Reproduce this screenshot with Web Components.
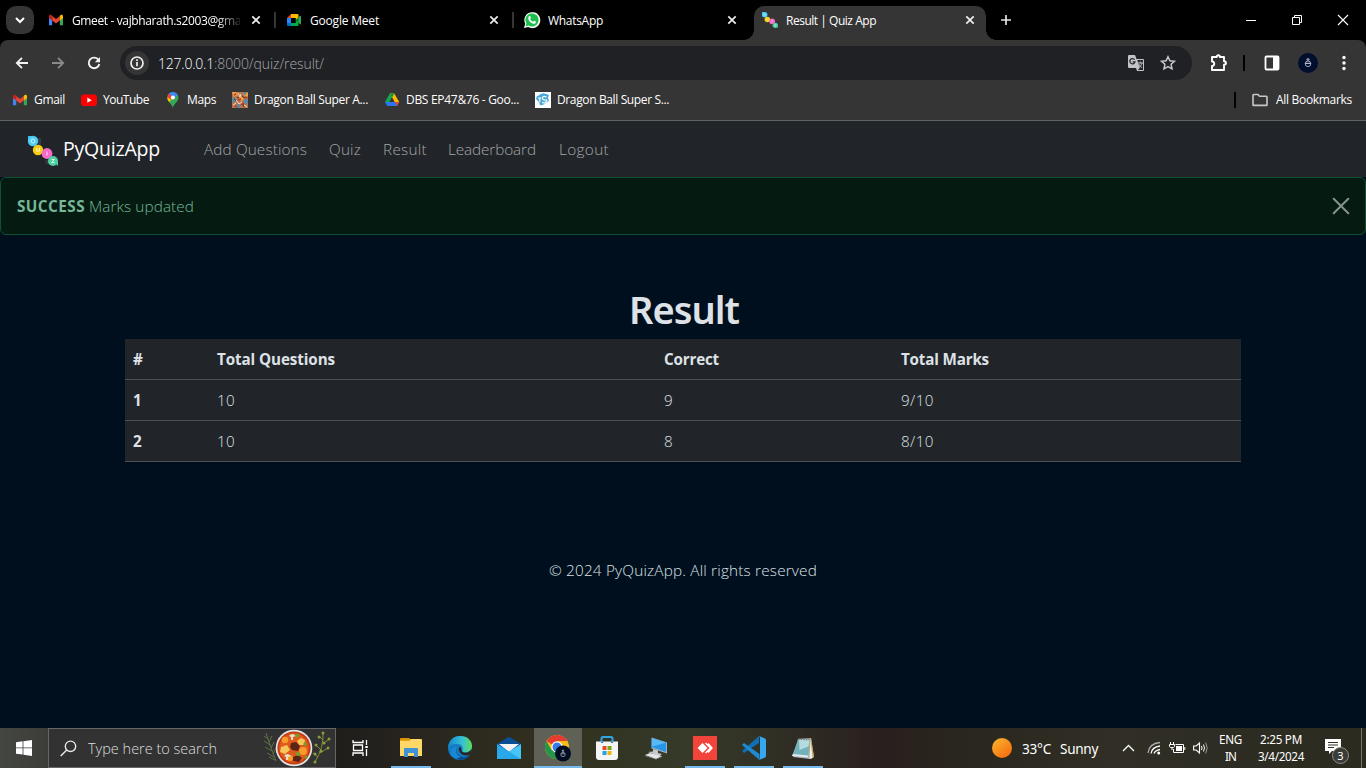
<!DOCTYPE html>
<html lang="en">
<head>
<meta charset="utf-8">
<title>Result | Quiz App</title>
<style>
html,body{margin:0;height:100%;overflow:hidden;background:#000f1e}
body{font-family:"Open Sans","Noto Sans",sans-serif;font-size:12px;color:#fff}
</style>
</head>
<body>
<desktop-screen></desktop-screen>
<script>
const ICONS = {
 gmail:[16,16,'<path d="M1 4v9.2h3.2V7.6z" fill="#4285f4"/><path d="M11.8 7.4v5.8H15V4z" fill="#34a853"/><path d="M1 4.2v2l3.2 2.4V4L3.4 3C2.2 2.3 1 3 1 4.2z" fill="#c5221f"/><path d="M4.2 4L8 6.9 11.8 4v4.6L8 11.4 4.2 8.6z" fill="#ea4335"/><path d="M15 4.2v2l-3.2 2.4V4l.8-1c1.200-.7 2.400 0 2.400 1.200z" fill="#fbbc04"/>'],
 meet:[16,16,'<path d="M1 6l4-4v4z" fill="#ea4335"/><path d="M5 2h6.500q1 0 1 1v4l-3 1V6H5z" fill="#ffba00"/><path d="M1 6h4v5H1z" fill="#2684fc"/><path d="M1 11h4v3H2q-1 0-1-1z" fill="#0066da"/><path d="M5 11h4.500V8l3-1v6q0 1-1 1H5z" fill="#00ac47"/><path d="M5 6h4.500v5H5z" fill="#000"/><path d="M9.500 8L14 4q1-.7 1 .3v7.400q0 1-1 .3z" fill="#00832d"/><path d="M12.500 5.300L14.200 4q.8-.5.8.3v7.400q0 .8-.8.3l-1.700-1.400z" fill="#34a853"/>'],
 whatsapp:[16,16,'<path d="M0 16l1.200-4.200A8 8 0 1 1 4.200 15z" fill="#fff"/><path d="M1.500 14.500l.9-3A6.600 6.600 0 1 1 4.500 13.600z" fill="#1dbf4c"/><path d="M5 4.200c.4-.4 1-.4 1.200 0l.7 1.600c0 .5-.5.8-.8 1.200.7 1.300 1.600 2.100 2.900 2.700.4-.3.700-1 1.200-1l1.600.8c.4.4 0 1.500-.7 1.900-1.800 1-5-.9-6.200-3C4.200 6.900 4 5.200 5 4.200z" fill="#fff"/>'],
 quiz:[30,30,'<path d="M10 2h3v7h-3zM17 24h5v4h-4z" fill="#333b48"/><path d="M0 0h6v6H0z" fill="#35bdea"/><circle cx="5" cy="5" r="5.200" fill="#4dccf4"/><circle cx="10" cy="14" r="5.200" fill="#f9cf16"/><circle cx="19" cy="17.500" r="5.400" fill="#f56cc8"/><circle cx="25" cy="25" r="5" fill="#4fcfa0"/><path d="M26 26h4v4z" fill="#4fcfa0"/><g stroke="#fff" fill="none" opacity=".75"><circle cx="5" cy="5" r="2"/><path d="M8.500 12v2q0 1.500 1.500 1.500t1.500-1.500v-2M19 15.500v4M23.500 23.500h3l-3 3h3"/></g>'],
 down:[12,12,'<path d="M2 4l4 4 4-4" fill="none" stroke="#fff" stroke-width="2"/>'],
 x:[10,10,'<path d="M1.300 1.300l7.400 7.400M8.700 1.300L1.300 8.700" stroke="#eee" stroke-width="1.700"/>'],
 plus:[12,12,'<path d="M6 1v10M1 6h10" stroke="#e6e6e6" stroke-width="1.700"/>'],
 min:[10,10,'<path d="M0 5.500h10" stroke="#fff"/>'],
 restore:[10,10,'<path d="M.5 2.500h7v7h-7zM2.500 2.500v-2h7v7h-2" fill="none" stroke="#fff"/>'],
 wclose:[10,10,'<path d="M0 0l10 10M10 0L0 10" stroke="#fff" stroke-width="1.100"/>'],
 back:[14,14,'<path d="M13 7H2M7 1.800L1.800 7 7 12.200" fill="none" stroke="#f2f2f2" stroke-width="1.800"/>'],
 fwd:[14,14,'<path d="M1 7h11M7 1.800L12.200 7 7 12.200" fill="none" stroke="#8b8b8b" stroke-width="1.800"/>'],
 reload:[14,14,'<path d="M11.500 4A5.300 5.300 0 1 0 12.300 8" fill="none" stroke="#f2f2f2" stroke-width="1.900"/><path d="M13 1v5.200H7.800z" fill="#f2f2f2"/>'],
 info:[16,16,'<circle cx="8" cy="8" r="6" fill="none" stroke="#eee" stroke-width="1.700"/><path d="M8 7v4.200M8 4.300v1.700" stroke="#eee" stroke-width="1.700"/>'],
 translate:[16,16,'<path d="M1 0h6l1.500 4H15q1 0 1 1v10q0 1-1 1H9l-1-3H1q-1 0-1-1V1q0-1 1-1z" fill="#c0c3c7"/><path d="M9 5h6v10H9.800l2-2L9.300 5z" fill="#222428"/><path d="M10 8h5M12.300 6.500V8M14 8c-.4 2-2 3.500-3 4.200M11 9.200c.7 1.500 2 2.800 3 3.500" stroke="#c0c3c7" fill="none"/><path d="M6.600 4.700A2.600 2.600 0 1 0 7 6.800H4.700" stroke="#27292d" stroke-width="1.300" fill="none"/>'],
 star:[16,16,'<path d="M8 1.700l1.900 4.100 4.500.5-3.300 3 .9 4.500-4-2.300-4 2.300.9-4.500-3.300-3 4.500-.5z" fill="none" stroke="#c7c9cc" stroke-width="1.500"/>'],
 ext:[18,18,'<path d="M2 3h4.700c0-2.300 3.200-2.300 3.200 0H14v4.300c2.600 0 2.600 3.400 0 3.400V16H2v-4c3-.2 3-4.300 0-4.500z" fill="none" stroke="#fff" stroke-width="1.900" stroke-linejoin="round"/>'],
 panel:[16,16,'<rect x="1.500" y="1.500" width="13" height="13" rx="1" fill="none" stroke="#fff" stroke-width="1.800"/><path d="M9 1h6v14H9z" fill="#fff"/>'],
 avatar:[20,20,'<circle cx="10" cy="10" r="10" fill="#020e2e"/><circle cx="10" cy="6.500" r="1.600" fill="#8990a3"/><circle cx="10" cy="10.800" r="2.800" fill="none" stroke="#9ba2b2"/><path d="M7 9.800h6v1.200H7z" fill="#b5bac6"/>'],
 dots:[4,16,'<circle cx="2" cy="2.500" r="1.700" fill="#fff"/><circle cx="2" cy="8" r="1.700" fill="#fff"/><circle cx="2" cy="13.500" r="1.700" fill="#fff"/>'],
 youtube:[16,16,'<rect y="2.500" width="16" height="11.500" rx="3" fill="#f00"/><path d="M6.300 5.600v5.200L10.800 8.200z" fill="#fff"/>'],
 maps:[16,16,'<path d="M7.700 16C7.500 12.500 2.300 10 2.300 5.600a5.600 5.600 0 0 1 11.200 0C13.500 10 8.200 12.500 7.700 16z" fill="#34a853"/><path d="M2.300 5.600c0 2 1 3.500 1.900 4.700L8 5.600z" fill="#fbbc04"/><path d="M6 .3a5.600 5.600 0 0 1 6.900 3L8 7z" fill="#4285f4"/><path d="M4 1.400L8 5 6 7.500 2.400 5Q2.600 2.800 4 1.400z" fill="#ea4335"/><path d="M3.800 1.500Q5 .4 6.500.2L8 5z" fill="#4285f4"/><circle cx="7.900" cy="5.600" r="2" fill="#fff"/>'],
 anime:[16,16,'<path d="M0 0h16v16H0z" fill="#b8734a"/><path d="M0 0h4l2 3-4 2zM11 1h5v3l-3 1zM7 6l3-2 2 4-3 1z" fill="#f0a040"/><path d="M1 5l4 3-3 3-2-2zM11 8l5-1v4l-3 1zM6 12l3 1-2 3H4zM12 0h2v3l-3-1z" fill="#4f8cae"/><path d="M6 1l2 4 1-3M4 8l3 4 3-2M1 13l3-2M12 13l3 2" stroke="#eedfc8" fill="none"/><path d="M6 8l3-1M13 5l2 1M9 13l3-2M2 3l2-1M3 14l2 1" stroke="#c9302a" stroke-width="1.400"/><path d="M10 4l3 2M2 7l2 2M11 12l1 3M5 5l2 1" stroke="#403a3c"/>'],
 drive:[16,16,'<path d="M5.800 1.500h4.500l-2.300 4L3.400 14 1 10z" fill="#12a650"/><path d="M5.800 1.500h4.500L15.200 10h-4.700z" fill="#fcb900"/><path d="M5.800 1.500h4.500L8 5.600z" fill="#0d8a42"/><path d="M3.700 10h11.500L13 14H3.200L1 10z" fill="#2a75ed"/><path d="M11 10h4.200L13 14z" fill="#e9432f"/><path d="M8 5.600L10.600 10H5.500z" fill="#353535"/>'],
 dbs:[16,16,'<path d="M0 0h16v16H0z" fill="#fff"/><path d="M3 4q4-4 8-2l3 1-1 3 1 3-2 1q-3 4-7 3l-1-3-3-3 1-3z" fill="#4aa8d6"/><path d="M11.500 5q-4-1.500-4 1t3 2-.5 3L7 10.500M3 6h3.500M4.800 6v4" stroke="#fff" stroke-width="1.200" fill="none"/>'],
 folder:[16,16,'<path d="M1 3.200q0-.7.700-.7H6l1.600 1.700h6.700q.7 0 .7.700v7.800q0 .7-.7.700H1.700q-.7 0-.7-.7z" fill="none" stroke="#c7c7c7" stroke-width="1.600"/>'],
 alertx:[16,16,'<path d="M.7.7l14.600 14.600M15.300.7L.7 15.300" stroke="#87928b" stroke-width="2" stroke-linecap="round"/>'],
 win:[16,16,'<path d="M0 2.200l6.600-.9v6.200H0zM7.400 1.200L16 0v7.500H7.400zM0 8.300h6.600v6.300L0 13.700zM7.400 8.300H16V16l-8.600-1.200z" fill="#fff"/>'],
 search:[17,17,'<circle cx="10.500" cy="6.300" r="5.200" fill="none" stroke="#e6e6e6" stroke-width="1.400"/><path d="M6.700 10L.7 16" stroke="#e6e6e6" stroke-width="1.500"/>'],
 stew:[68,38,'<g stroke="#5f7146" fill="none"><path d="M3 4q5 15 10 28M5 10L1 7M6 13l3-6M7 16l-6-4M8 19l3-6M9 22l-7-4M10 25l3-6M11 28l-7-4M12 31l-6-3"/></g><g stroke="#7f8f38" fill="none"><path d="M60 4q1 14-8 29M60 11l-4-4M60 15l6-5M58 21l-6-6M57 24l8-5M55 28l-5-4"/></g><g fill="#8b9c3a"><circle cx="60" cy="4" r="1.500"/><circle cx="56" cy="8" r="1.500"/><circle cx="66" cy="10" r="1.500"/><circle cx="61" cy="14" r="1.500"/><circle cx="53" cy="16" r="1.500"/><circle cx="65" cy="19" r="1.500"/><circle cx="58" cy="22" r="1.500"/><circle cx="52" cy="25" r="1.500"/><circle cx="52" cy="33" r="1.500"/></g><circle cx="31" cy="19" r="18.300" fill="#dfe3e5"/><circle cx="31" cy="19" r="16.600" fill="#c83a12"/><circle cx="31" cy="19" r="14.800" fill="#df5a1c"/><g fill="#f79b2c"><circle cx="22" cy="11" r="3.300"/><circle cx="40" cy="22" r="3.900"/><circle cx="27" cy="29" r="3"/></g><g fill="#f6c65a"><path d="M18 18l6-2 3 5-5 4-5-2zM34 12l4-3 4 2-1 5-5 0z"/></g><g fill="#5b2415"><path d="M28 14l5-1 4 4-2 5-6-1-2-3zM30 28l5-2 4 3-3 4-6-1z"/></g><g fill="#eadbc5"><path d="M26 7q3-4 7 0l-3 1v3h-2V8zM21 27q3-4 7 0l-3 1v3h-2v-3z"/></g><g fill="#6aa32c"><circle cx="34" cy="6.500" r="2"/><circle cx="35" cy="25" r="2"/><circle cx="42" cy="15" r="1.700"/><circle cx="43" cy="28" r="1.500"/></g>'],
 taskview:[17,16,'<path d="M1 0v2.500h10V0M1 16v-3h10v3M1.500 5h9v5.500h-9zM14.500 0v5M14.500 9v7" fill="none" stroke="#fff" stroke-width="1.300"/><path d="M13.300 6h2.500v2h-2.500z" fill="#fff"/>'],
 explorer:[24,24,'<path d="M1 3q0-1 1-1h8l2 2H1z" fill="#d79300"/><path d="M1 4h9l2-1h10q1 0 1 1v16H1z" fill="#ffd766"/><path d="M1 4h9l1-1v2H1z" fill="#e9a519"/><path d="M5 13q0-1 1-1h12q1 0 1 1v8h-4v-4H9v4H5z" fill="#3e92d6"/>'],
 edge:[24,24,'<defs><linearGradient id="a"><stop stop-color="#1689ce"/><stop offset=".6" stop-color="#35c1d3"/><stop offset="1" stop-color="#62dc55"/></linearGradient></defs><circle cx="12" cy="12" r="12" fill="#147bc5"/><path d="M.3 11C1 3 7 0 12 0c8 0 12 5 12 10 0 4-3 6.300-6.500 6.300-2.500 0-4-1-3-2.300C16 11 13 8 9 8 5 8 1 9 .3 12z" fill="url(#a)"/><path d="M8.500 12c-1 5 3 9 7.500 9 3 0 5-1.500 6.300-2.500C20 22 16 24 12 24c-5-1-7-9-3.500-12z" fill="#0b4a8c"/><path d="M11 11c3 0 2 3 3 4.500q2 2 6 .8l4-3-1 5c-3 2-9 1.700-11-1.700q-2-3-1-5.600z" fill="#2b2723"/><path d="M9 11.500c-2 4 0 8 4 9.500-5 3-11-1-10-6 .3-3 3-4.500 6-3.500z" fill="#1989d5"/>'],
 mail:[24,24,'<path d="M0 8L12 .8 24 8v6H0z" fill="#0a4f96"/><path d="M2 8h20L12 16z" fill="#f4f4f4"/><path d="M0 8l12 7.500V23H0z" fill="#27a9ec"/><path d="M24 8v15H0z" fill="#46c6f8"/><path d="M12 15.500L24 23H0z" fill="#1b9be0" opacity=".7"/>'],
 chrome:[26,27,'<circle cx="12" cy="12" r="12" fill="#f6bd17"/><path d="M1.600 6A12 12 0 0 1 22.400 6H12v7z" fill="#e33b2e"/><path d="M1.600 6A12 12 0 0 0 12 24l5-9H6.500z" fill="#23964a"/><circle cx="12" cy="12" r="5.700" fill="#fff"/><circle cx="12" cy="12" r="4.500" fill="#367be8"/><circle cx="18" cy="18.500" r="8" fill="#020d24"/><circle cx="18" cy="15.800" r="1.200" fill="#7b8294"/><circle cx="18" cy="19.500" r="2.200" fill="none" stroke="#8a91a2" stroke-width=".9"/><path d="M16 18.800h4" stroke="#8a91a2"/>'],
 store:[24,24,'<path d="M6.500 6V2.500q0-1.500 1.500-1.500h8q1.500 0 1.500 1.500V6" fill="none" stroke="#31a8e5" stroke-width="2"/><path d="M1 5.500h22V21q0 3-3 3H4q-3 0-3-3z" fill="#f5f5f5"/><path d="M7.500 10h4v4h-4z" fill="#e74d25"/><path d="M12.500 10h4v4h-4z" fill="#75a915"/><path d="M7.500 15h4v4h-4z" fill="#20a2e7"/><path d="M12.500 15h4v4h-4z" fill="#f5b40c"/><path d="M6 5.500h2.200V7H6zM16 5.500h2.200V7H16z" fill="#2482be"/>'],
 pc:[24,24,'<path d="M7.500 1.500l15.500 5v11L7.500 12.500z" fill="#9fb0bc"/><path d="M8 2l14 4.800v9.200L7 11z" fill="#2896e8"/><path d="M8 2l14 4.800L8 10.500z" fill="#59b9f5"/><path d="M9 13l5 1.500V17l4 1-3 2-11-4 5-.5z" fill="#c4c8ca"/><path d="M1 19l5-2 12 3-6 3z" fill="#e3e5e6"/><path d="M1 19l11 4 6-3v1l-6 2.500L1 20z" fill="#84898c"/>'],
 anydesk:[24,24,'<path d="M0 0h24v24H0z" fill="#f2443b"/><path d="M4.500 12l5-5 5 5-5 5z" fill="#fff"/><path d="M12.500 7l5 5-5 5M15 7.500l4 4.500-4 4.500" fill="none" stroke="#fff" stroke-width="1.400"/>'],
 vscode:[24,24,'<path d="M0 15L17 0v7L2 17z" fill="#0f6fb5"/><path d="M0 9l2-2L17.500 18v6z" fill="#1e8ad3"/><path d="M17 0l6 2.500q1 .5 1 1.500v16q0 1-1 1.500L17 24q1-1 1-2V2q0-1-1-2z" fill="#35a8ef"/>'],
 notepad:[24,24,'<path d="M7 3l13-1 3 19-4 2-17-2z" fill="#a9b4b8"/><path d="M20 2l3 19-4 2-1-15z" fill="#caa75a"/><path d="M19.500 3l2 19-3 1z" fill="#eee"/><path d="M7 4l12 .5-2 17L1 20z" fill="#73b1bb"/><path d="M8 4l10.500.5-1 6-9 3.500z" fill="#b5dbe0"/><path d="M1 20l16 1.500.2-2L2 18z" fill="#e4e9ea"/><path d="M8 2v2M10.500 2v2M13 2v2M15.500 2v2M18 2v2" stroke="#777"/>'],
 sun:[20,20,'<defs><linearGradient id="s" x2=".8" y2="1"><stop stop-color="#fbb832"/><stop offset="1" stop-color="#f56b0c"/></linearGradient></defs><circle cx="10" cy="10" r="10" fill="url(#s)"/>'],
 up:[13,13,'<path d="M1 9l5.500-5.500L12 9" fill="none" stroke="#fff" stroke-width="1.300"/>'],
 wifi:[14,14,'<g fill="none" stroke-width="1.300"><path d="M1 12Q2 2.500 13 1.500" stroke="#aaa"/><path d="M4 12.500Q5 6 13 5M7 12.500Q8 9.500 13 8.500" stroke="#fff"/></g><circle cx="11.700" cy="12" r="1.500" fill="#fff"/>'],
 battery:[17,14,'<path d="M6.500 3.500h8v8h-10V8M15.800 6v3" fill="none" stroke="#fff"/><path d="M7 5h6v5H7z" fill="#fff"/><path d="M1.500 1v2M4.500 1v2M.5 3.500h5v2l-1 1h-3l-1-1zM3 6.500V9" fill="none" stroke="#fff"/>'],
 speaker:[16,14,'<path d="M.6 5h2.600l3.300-3v10L3.200 9H.6z" fill="none" stroke="#fff" stroke-width="1.100"/><path d="M8.500 5q1 2 0 4M10.500 3.500q2 3.500 0 7" stroke="#fff" fill="none"/><path d="M12.700 1.500q3 5.500 0 11" stroke="#999" fill="none"/>'],
 note:[16,16,'<path d="M0 0h16v12H7l-3 3v-3H0z" fill="#fff"/><path d="M3 3.500h10M3 6h10M3 8.500h6" stroke="#302e26" stroke-width="1.200"/>']
};
const define = (name, css, html, setup) => customElements.define(name, class extends HTMLElement {
  connectedCallback() {
    if (this.shadowRoot) return;
    const root = this.attachShadow({mode: 'open'});
    root.innerHTML = `<style>${css}</style>${typeof html === 'function' ? html(this) : html}`;
    if (setup) setup(this, root);
  }
});

define('ui-icon', ':host{display:block;flex:none}svg{display:block;overflow:visible}', el => {
  const [w, h, body] = ICONS[el.getAttribute('name')];
  const s = el.getAttribute('size');
  return `<svg width="${s || w}" height="${s || h}" viewBox="0 0 ${w} ${h}">${body}</svg>`;
});

define('desktop-screen', ':host{display:flex;flex-direction:column;width:1366px;height:768px}', `
<tab-strip></tab-strip><address-bar></address-bar><bookmark-bar></bookmark-bar>
<quiz-page></quiz-page><task-bar></task-bar>`);

define('browser-tab', `
:host{display:flex;align-items:center;width:238px;height:40px;box-sizing:border-box;padding:0 13px 0 12px;position:relative;flex:none}
ui-icon{margin-right:8px}.t{flex:1;overflow:hidden;white-space:nowrap}
:host([long]) .t{flex:0 0 168px;-webkit-mask:linear-gradient(90deg,#000 144px,transparent 172px);mask:linear-gradient(90deg,#000 144px,transparent 172px)}
.x{margin:0 0 0 auto}
:host([sep])::before{content:"";position:absolute;left:0;top:12px;width:2px;height:16px;background:#363636}
:host([active])::before{content:"";position:absolute;left:4px;right:2px;top:6px;bottom:0;background:#353535;border-radius:10px 10px 0 0}
:host([active])::after{content:"";position:absolute;left:-6px;right:-8px;bottom:0;height:10px;background:radial-gradient(circle at 0 0,transparent 9.500px,#353535 10px) 0 0/10px 10px no-repeat,radial-gradient(circle at 100% 0,transparent 9.500px,#353535 10px) 100% 0/10px 10px no-repeat}
ui-icon,.t{z-index:1}`,
el => `<ui-icon name="${el.getAttribute('icon')}" size="16"></ui-icon><div class="t"><slot></slot></div><ui-icon class="x" name="x"></ui-icon>`);

define('tab-strip', `
:host{display:flex;height:40px;background:#000;align-items:center}
.menu{display:grid;place-items:center;width:28px;height:28px;border-radius:10px;background:#353535;margin:0 2px 0 6px}
.plus{margin-left:12px}.win{display:flex;margin-left:auto;padding-right:18px;gap:36px}`, `
<div class="menu"><ui-icon name="down"></ui-icon></div>
<browser-tab icon="gmail" long><fit-text w="169">Gmeet - vajbharath.s2003@gma</fit-text></browser-tab>
<browser-tab icon="meet" sep><fit-text w="69">Google Meet</fit-text></browser-tab>
<browser-tab icon="whatsapp" sep><fit-text w="55">WhatsApp</fit-text></browser-tab>
<browser-tab icon="quiz" active><fit-text w="90">Result | Quiz App</fit-text></browser-tab>
<ui-icon class="plus" name="plus"></ui-icon>
<div class="win"><ui-icon name="min"></ui-icon><ui-icon name="restore"></ui-icon><ui-icon name="wclose"></ui-icon></div>`);

define('address-bar', `
:host{display:flex;align-items:center;height:46px;background:#353535;border-radius:8px 8px 0 0;box-shadow:0 -8px #000;box-sizing:border-box;padding:0 20px 0 15px;clip-path:inset(0)}
.nav{display:flex;gap:22px;width:105px}
.omni{display:flex;align-items:center;box-sizing:border-box;width:1072px;height:34px;border-radius:17px;background:#202125;padding:0 16px 0 5px}
.info{display:grid;place-items:center;width:24px;height:24px;border-radius:50%;background:#353535;margin-right:9px}
.url{flex:1;font-size:14px;font-weight:300;color:#a5a7aa;white-space:nowrap}.url fit-text:first-child{color:#fff}
.omni>ui-icon+ui-icon{margin-left:16px}
.right{display:flex;align-items:center;margin-left:auto}
.bar{width:2px;height:16px;background:#000;margin:0 19px 0 15px}`, `
<div class="nav"><ui-icon name="back"></ui-icon><ui-icon name="fwd"></ui-icon><ui-icon name="reload"></ui-icon></div>
<div class="omni"><div class="info"><ui-icon name="info"></ui-icon></div>
<div class="url"><fit-text w="56">127.0.0.1</fit-text><fit-text w="110">:8000/quiz/result/</fit-text></div>
<ui-icon name="translate"></ui-icon><ui-icon name="star"></ui-icon></div>
<div class="right"><ui-icon name="ext"></ui-icon><div class="bar"></div><ui-icon name="panel"></ui-icon><ui-icon name="avatar" style="margin:0 24px 0 18px"></ui-icon><ui-icon name="dots"></ui-icon></div>`);

define('book-mark', ':host{display:flex;align-items:center;gap:6px;white-space:nowrap}:host([wide]){gap:8px}',
el => `<ui-icon name="${el.getAttribute('icon')}"></ui-icon><slot></slot>`);

define('bookmark-bar', `
:host{display:flex;align-items:center;height:35px;box-sizing:border-box;background:#353535;border-bottom:1px solid #626262;padding:0 14px 6px 12px;gap:16px;line-height:20px}
.bar{width:2px;height:16px;background:#000;margin-left:auto}`, `
<book-mark icon="gmail"><fit-text w="31">Gmail</fit-text></book-mark>
<book-mark icon="youtube"><fit-text w="46">YouTube</fit-text></book-mark>
<book-mark icon="maps"><fit-text w="29">Maps</fit-text></book-mark>
<book-mark icon="anime"><fit-text w="114">Dragon Ball Super A...</fit-text></book-mark>
<book-mark icon="drive"><fit-text w="113">DBS EP47&amp;76 - Goo...</fit-text></book-mark>
<book-mark icon="dbs"><fit-text w="112">Dragon Ball Super S...</fit-text></book-mark>
<div class="bar"></div>
<book-mark icon="folder" wide><fit-text w="76">All Bookmarks</fit-text></book-mark>`);

define('nav-bar', `
:host{display:flex;align-items:center;height:56px;background:#212529;padding-left:28px;color:#a3a5a7;font-size:15.300px;font-weight:300}
ui-icon{margin-top:3px}
.brand{font-size:19.500px;line-height:26px;font-weight:400;color:#fff;margin:-1px 44px 0 5px}
.links{display:flex}.links>*{margin-right:22px}.links>:nth-child(3){margin-right:21px}.links>:nth-child(4){margin-right:23px}`, `
<ui-icon name="quiz"></ui-icon><div class="brand"><fit-text w="97">PyQuizApp</fit-text></div>
<div class="links"><fit-text w="103">Add Questions</fit-text><fit-text w="32">Quiz</fit-text><fit-text w="44">Result</fit-text><fit-text w="88">Leaderboard</fit-text><fit-text w="50">Logout</fit-text></div>`);

define('alert-box', `
:host{display:flex;align-items:center;height:58px;box-sizing:border-box;border:1px solid #0f5132;border-radius:6px;background:#051b11;color:#75b798;padding:0 16px;font-size:15.300px;font-weight:300}
b{font-weight:700;margin-right:4px}ui-icon{margin-left:auto}`, `
<b><fit-text w="68">SUCCESS</fit-text></b><fit-text w="105">Marks updated</fit-text><ui-icon name="alertx"></ui-icon>`);

define('result-table', `
:host{display:block;margin:0 125px;background:#212529;color:#dee2e6;font-size:15.200px;line-height:22px}
.row{display:grid;grid-template-columns:84px 447px 237px 1fr;height:40px;border-bottom:1px solid #4d5154;align-items:center;padding-left:8px;font-weight:300}
.head,.row>:first-child{font-weight:700}`, `
<div class="row head"><fit-text w="9">#</fit-text><fit-text w="118">Total Questions</fit-text><fit-text w="55">Correct</fit-text><fit-text w="88">Total Marks</fit-text></div>
<div class="row"><span>1</span><fit-text w="18">10</fit-text><span>9</span><fit-text w="33">9/10</fit-text></div>
<div class="row"><span>2</span><fit-text w="18">10</fit-text><span>8</span><fit-text w="33">8/10</fit-text></div>`);

define('quiz-page', `
:host{display:flex;flex-direction:column;flex:1;background:#000f1e;color:#dee2e6}
h1{font-family:"Noto Sans","Open Sans",sans-serif;font-size:38px;line-height:48px;font-weight:600;text-align:center;margin:50px 0 6px 2px}
footer{text-align:center;font-size:15.300px;font-weight:300;line-height:24px;margin-top:96px}`, `
<nav-bar></nav-bar><alert-box></alert-box>
<h1><fit-text w="110">Result</fit-text></h1><result-table></result-table>
<footer><fit-text w="268">© 2024 PyQuizApp. All rights reserved</fit-text></footer>`);

define('task-button', `
:host{display:flex;width:48px;height:40px;margin-right:1px;align-items:center;justify-content:center;position:relative;flex:none}
:host([on])::after{content:"";position:absolute;left:4px;right:4px;bottom:0;height:2px;background:#76b9ed}
:host([active]){background:#5f6056}:host([active])::after{left:0;right:0}`,
el => `<ui-icon name="${el.getAttribute('icon')}"></ui-icon>`);

define('task-bar', `
:host{display:flex;align-items:center;height:40px;background:linear-gradient(90deg,#444640 0,#3c3d39 48px,#1f1e1b 340px,#29251f 420px,#32311f 560px,#353a29 690px,#2f2c23 800px,#291f1e 880px,#29271d 960px,#302e25 1110px,#2c2b20 1366px);font-size:13.600px;font-family:"Noto Sans","Open Sans",sans-serif}
.search{display:flex;align-items:center;box-sizing:border-box;width:288px;height:40px;background:#323232;border:1px solid #666;padding:0 4px 0 11px;font-size:14.500px;font-family:"Open Sans",sans-serif;font-weight:300;color:#ddd}
.search fit-text{margin-left:11px}.search ui-icon:last-child{margin-left:auto}
.tray{display:flex;align-items:center;margin-left:auto;white-space:nowrap}
.st{display:flex;flex-direction:column;align-items:center;font-size:11.700px;line-height:17px;margin-top:-1px}
.note{position:relative;margin:-2px 20px 0 21px}
.badge{position:absolute;left:7px;top:8px;width:15px;height:15px;border-radius:50%;background:#3b3b38;border:1px solid #8d8d88;font-size:11px;line-height:15px;text-align:center}
.edge{width:1px;height:40px;background:#77766e;margin-right:4px}`, `
<task-button icon="win" style="margin:0"></task-button>
<div class="search"><ui-icon name="search"></ui-icon><fit-text w="129">Type here to search</fit-text><ui-icon name="stew"></ui-icon></div>
<task-button icon="taskview" style="margin-right:3px"></task-button>
<task-button icon="explorer" on></task-button><task-button icon="edge"></task-button><task-button icon="mail"></task-button><task-button icon="chrome" on active></task-button><task-button icon="store"></task-button><task-button icon="pc"></task-button><task-button icon="anydesk" on></task-button><task-button icon="vscode" on></task-button><task-button icon="notepad" on></task-button>
<div class="tray"><ui-icon name="sun"></ui-icon>
<fit-text w="29" style="margin-left:10px">33°C</fit-text><fit-text w="38" style="margin-left:9px">Sunny</fit-text>
<ui-icon name="up" style="margin-left:24px"></ui-icon><ui-icon name="wifi" style="margin-left:12px"></ui-icon><ui-icon name="battery" style="margin-left:8px"></ui-icon><ui-icon name="speaker" style="margin-left:7px"></ui-icon>
<div class="st" style="margin-left:10px"><fit-text w="23">ENG</fit-text><fit-text w="11">IN</fit-text></div>
<div class="st" style="margin-left:16px"><fit-text w="42">2:25 PM</fit-text><fit-text w="46">3/4/2024</fit-text></div>
<div class="note"><ui-icon name="note"></ui-icon><div class="badge">3</div></div><div class="edge"></div></div>`);

/* Text run spread evenly over the width given in px by its "w" attribute. */
define('fit-text', ':host{display:inline-block;white-space:nowrap}span{display:inline-block}', '<span><slot></slot></span>', (el, root) => {
  const w = +el.getAttribute('w'), span = root.querySelector('span');
  const gap = (w - span.getBoundingClientRect().width) / Math.max(1, el.textContent.length);
  span.style.letterSpacing = gap.toFixed(3) + 'px';
  el.style.width = w + 'px';
});
</script>
</body>
</html>
